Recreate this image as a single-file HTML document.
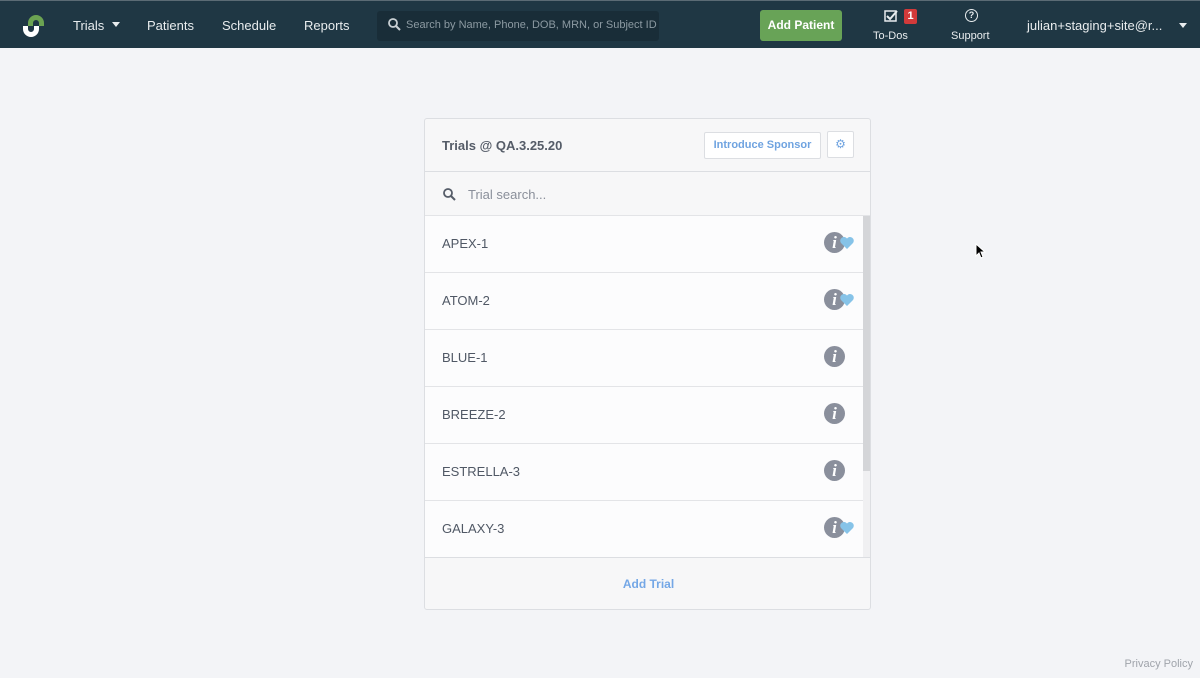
<!DOCTYPE html><html><head><style>
body{margin:0;width:1200px;height:678px;background:#f3f4f7;font-family:"Liberation Sans",sans-serif;position:relative;overflow:hidden}
.nav{position:absolute;top:0;left:0;width:1200px;height:48px;background:#1f3744;border-top:1px solid #5b6b75;box-sizing:border-box;color:#e8ecee;font-size:13px}
.nav span{position:absolute}
.card{position:absolute;left:424px;top:118px;width:447px;height:492px;border:1px solid #dcdee2;border-radius:3px;background:#f7f7f8;box-sizing:border-box;overflow:hidden}
.row{position:absolute;left:0;width:438px;height:56px;background:#fcfcfd;border-bottom:1px solid #e3e4e7;font-size:13px;color:#505865}
.row b{font-weight:normal;position:absolute;left:17px;top:20px}
.i{position:absolute;left:399px;top:16px;width:21px;height:21px;border-radius:50%;background:#8a8f9c;color:#fff;font:bold italic 17px "Liberation Serif",serif;text-align:center;line-height:21px}
.h{position:absolute;left:414px;top:20px}
</style></head><body>
<div class="nav">
<svg style="position:absolute;left:21px;top:11px" width="26" height="27" viewBox="0 0 26 27"><path d="M7 11 A8 8 0 0 1 23 11 L23 14 L18 14 L18 11 A3 3 0 0 0 12 11 L12 14 L7 14 Z" fill="#6ba352"/><path d="M2 14 L7 14 L7 17 A3 3 0 0 0 13 17 L13 14 L18 14 L18 17 A8 8 0 0 1 2 17 Z" fill="#fff"/></svg>
<span style="left:73px;top:17px">Trials</span><span style="left:112px;top:21px;border:4px solid transparent;border-top:5px solid #e8ecee;width:0;height:0"></span>
<span style="left:147px;top:17px">Patients</span><span style="left:222px;top:17px">Schedule</span><span style="left:304px;top:17px">Reports</span>
<span style="left:377px;top:10px;width:282px;height:30px;background:#192d38;border-radius:3px"></span>
<svg style="position:absolute;left:388px;top:17px" width="13" height="13"><circle cx="5" cy="5" r="4" stroke="#c9d0d4" stroke-width="1.8" fill="none"/><path d="M8 8L12 12" stroke="#c9d0d4" stroke-width="2"/></svg>
<span style="left:406px;top:18px;font-size:11px;color:#8c9aa2">Search by Name, Phone, DOB, MRN, or Subject ID</span>
<span style="left:760px;top:9px;width:82px;height:31px;background:#68a357;border-radius:3px;color:#fff;font-size:12px;font-weight:bold;text-align:center;line-height:31px">Add Patient</span>
<svg style="position:absolute;left:884px;top:8px" width="14" height="14"><rect x="1" y="2" width="11" height="10" fill="none" stroke="#e8ecee" stroke-width="1.5"/><path d="M3 7l3 3 7-8" stroke="#e8ecee" stroke-width="2" fill="none"/></svg>
<span style="left:904px;top:8px;width:13px;height:15px;background:#d23a3a;color:#fff;font-size:11px;font-weight:bold;text-align:center;line-height:15px;border-radius:2px">1</span>
<span style="left:873px;top:29px;font-size:11px">To-Dos</span>
<span style="left:965px;top:8px;width:11px;height:11px;border:1.5px solid #e8ecee;border-radius:50%;font-size:9px;font-weight:bold;text-align:center;line-height:11px">?</span>
<span style="left:951px;top:29px;font-size:11px">Support</span>
<span style="left:1027px;top:17px">julian+staging+site@r...</span><span style="left:1179px;top:22px;border:4px solid transparent;border-top:5px solid #e8ecee;width:0;height:0"></span>
</div>
<div class="card">
<div style="position:absolute;left:17px;top:19px;font-size:13px;font-weight:bold;color:#555c68">Trials @ QA.3.25.20</div>
<div style="position:absolute;left:279px;top:13px;width:115px;height:25px;border:1px solid #dcdee2;background:#fff;border-radius:2px;color:#6fa3e0;font-size:11px;font-weight:bold;text-align:center;line-height:25px">Introduce Sponsor</div>
<div style="position:absolute;left:402px;top:12px;width:25px;height:25px;border:1px solid #dcdee2;background:#fff;border-radius:2px;color:#6fa3e0;font-size:12px;text-align:center;line-height:25px">⚙</div>
<div style="position:absolute;left:0;top:52px;width:447px;height:1px;background:#dcdee2"></div>
<svg style="position:absolute;left:18px;top:69px" width="13" height="13"><circle cx="5" cy="5" r="4" stroke="#555c68" stroke-width="1.8" fill="none"/><path d="M8 8L12 12" stroke="#555c68" stroke-width="2"/></svg>
<div style="position:absolute;left:43px;top:68px;font-size:13px;color:#8a8f9a">Trial search...</div>
<div style="position:absolute;left:0;top:96px;width:447px;height:1px;background:#e3e4e7"></div>
<div class="row" style="top:97px"><b>APEX-1</b><div class="i">i</div><svg class="h" width="16" height="14" viewBox="0 0 16 14"><path d="M8 13L2 7A3.3 3.3 0 0 1 8 2.5A3.3 3.3 0 0 1 14 7Z" fill="#86c3e8"/></svg></div>
<div class="row" style="top:154px"><b>ATOM-2</b><div class="i">i</div><svg class="h" width="16" height="14" viewBox="0 0 16 14"><path d="M8 13L2 7A3.3 3.3 0 0 1 8 2.5A3.3 3.3 0 0 1 14 7Z" fill="#86c3e8"/></svg></div>
<div class="row" style="top:211px"><b>BLUE-1</b><div class="i">i</div></div>
<div class="row" style="top:268px"><b>BREEZE-2</b><div class="i">i</div></div>
<div class="row" style="top:325px"><b>ESTRELLA-3</b><div class="i">i</div></div>
<div class="row" style="top:382px"><b>GALAXY-3</b><div class="i">i</div><svg class="h" width="16" height="14" viewBox="0 0 16 14"><path d="M8 13L2 7A3.3 3.3 0 0 1 8 2.5A3.3 3.3 0 0 1 14 7Z" fill="#86c3e8"/></svg></div>
<div style="position:absolute;left:438px;top:97px;width:9px;height:341px;background:#f0f0f2"></div>
<div style="position:absolute;left:438px;top:97px;width:8px;height:255px;background:#d4d5d8"></div>
<div style="position:absolute;left:0;top:438px;width:447px;height:1px;background:#dcdee2"></div>
<div style="position:absolute;left:0;top:458px;width:447px;text-align:center;font-size:12px;font-weight:bold;color:#74a7e6">Add Trial</div>
</div>
<svg style="position:absolute;left:975px;top:243px" width="12" height="16"><path d="M1 1L1 13L4 10L6 15L8 14L6 9L10 9Z" fill="#000" stroke="#fff" stroke-width="1"/></svg>
<div style="position:absolute;right:7px;top:658px;font-size:11px;color:#a0a4ab">Privacy Policy</div>
</body></html>
